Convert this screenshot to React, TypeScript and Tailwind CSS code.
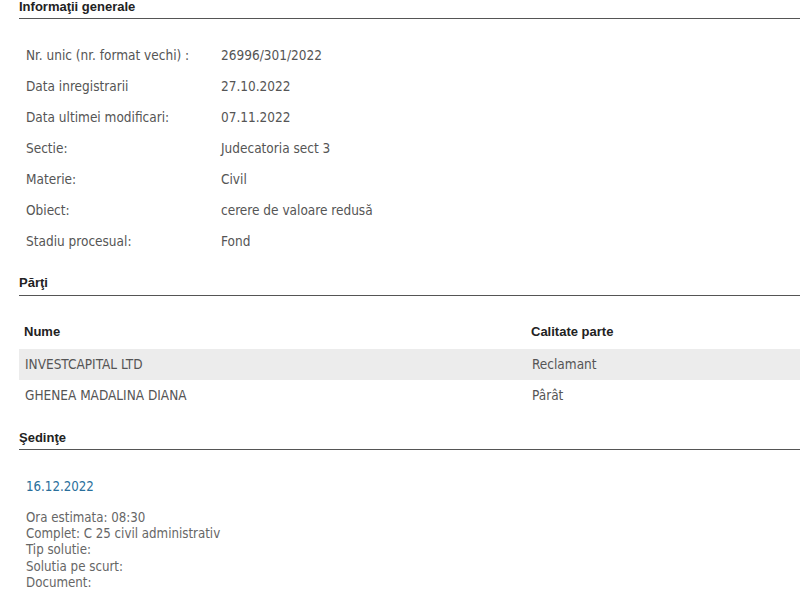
export default function App() {
  const info: [string, string][] = [
    ["Nr. unic (nr. format vechi) :", "26996/301/2022"],
    ["Data inregistrarii", "27.10.2022"],
    ["Data ultimei modificari:", "07.11.2022"],
    ["Sectie:", "Judecatoria sect 3"],
    ["Materie:", "Civil"],
    ["Obiect:", "cerere de valoare redusă"],
    ["Stadiu procesual:", "Fond"],
  ];
  const parti: [string, string][] = [
    ["INVESTCAPITAL LTD", "Reclamant"],
    ["GHENEA MADALINA DIANA", "Pârât"],
  ];

  return (
    <div className="w-[800px] h-[603px] overflow-hidden bg-white pl-[19px] font-['DejaVu_Sans_Condensed','DejaVu_Sans',sans-serif]">
      <h2 className="font-['Liberation_Sans',sans-serif] text-[13px] font-bold text-[#222] leading-[14px] pb-[4px] border-b border-[#555]">
        Informaţii generale
      </h2>
      <div className="pt-[21px] pl-[7px] text-[13.5px] text-[#555]">
        {info.map(([k, v]) => (
          <div key={k} className="flex h-[31px] items-center">
            <div className="w-[195px]">{k}</div>
            <div>{v}</div>
          </div>
        ))}
      </div>

      <h2 className="mt-[19px] font-['Liberation_Sans',sans-serif] text-[13px] font-bold text-[#222] leading-[13px] pb-[6px] border-b border-[#555]">
        Părţi
      </h2>
      <div className="mt-[19px] text-[13.5px]">
        <div className="flex h-[34px] items-center pl-[5px] font-['Liberation_Sans',sans-serif] font-bold text-[#222] text-[13px]">
          <div className="w-[507px]">Nume</div>
          <div>Calitate parte</div>
        </div>
        {parti.map(([n, c], i) => (
          <div
            key={n}
            className={`flex h-[31px] items-center pl-[6px] text-[#555] ${i === 0 ? "bg-[#ececec]" : ""}`}
          >
            <div className="w-[507px]">{n}</div>
            <div>{c}</div>
          </div>
        ))}
      </div>

      <h2 className="mt-[20px] font-['Liberation_Sans',sans-serif] text-[13px] font-bold text-[#222] leading-[13px] pb-[5px] border-b border-[#555]">
        Şedinţe
      </h2>
      <div className="pl-[7px] pt-[27px] text-[13.2px]">
        <div className="text-[#2a6f9b]">16.12.2022</div>
        <div className="mt-[13px] text-[#666] leading-[16.3px]">
          <div>Ora estimata: 08:30</div>
          <div>Complet: C 25 civil administrativ</div>
          <div>Tip solutie:</div>
          <div>Solutia pe scurt:</div>
          <div>Document:</div>
        </div>
      </div>
    </div>
  );
}
